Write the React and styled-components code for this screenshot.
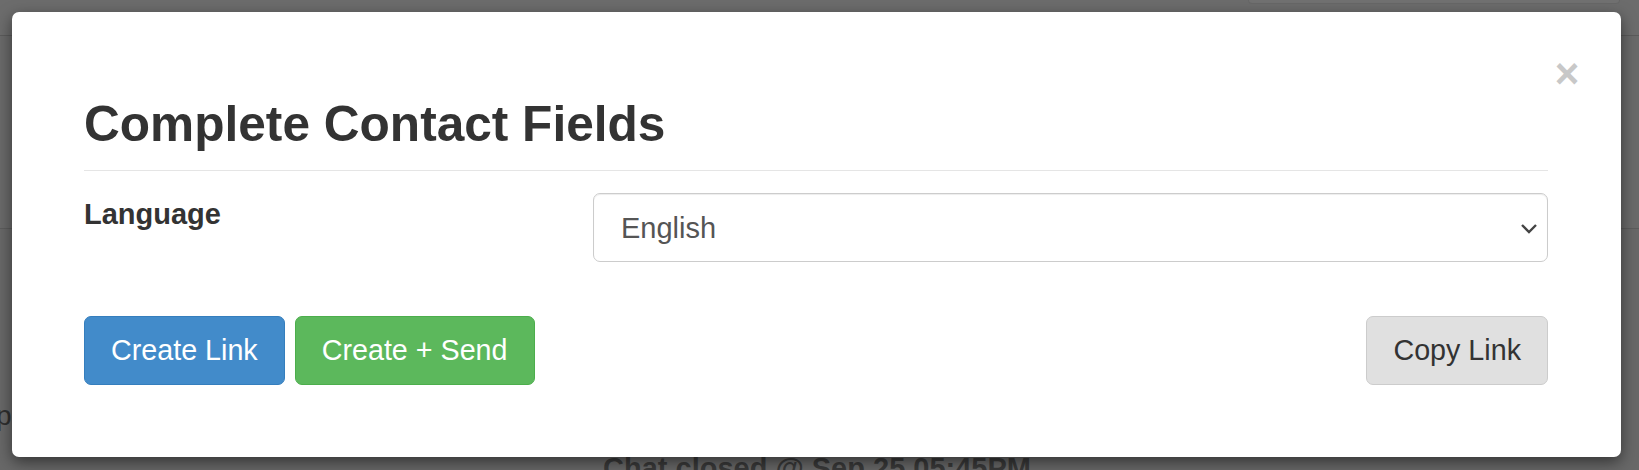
import React from 'react';
import styled, { createGlobalStyle } from 'styled-components';

const GlobalStyle = createGlobalStyle`
  html, body {
    margin: 0;
    padding: 0;
    background: #686868;
  }
  * {
    box-sizing: border-box;
  }
`

const Page = styled.div`
    position: relative;
    width: 1639px;
    height: 470px;
    overflow: hidden;
    background: #686868;
    font-family: "Liberation Sans", Arial, sans-serif;
`

const TopBar = styled.div`
    display: flex;
    justify-content: flex-end;
    align-items: flex-start;
    height: 36px;
    background: #6c6c6c;
    border-bottom: 1px solid #5b5b5b;
    padding-right: 19px;
`

const SearchStub = styled.div`
    width: 372px;
    height: 4px;
    background: #717171;
    border: 1px solid #676767;
    border-top: none;
    border-radius: 0 0 6px 6px;
`

const Band = styled.div`
    height: 193px;
    background: #6a6a6a;
    border-bottom: 1px solid #5c5c5c;
`

const Lower = styled.div`
    display: flex;
    flex-direction: column;
`

const Stray = styled.div`
    margin: 167px 0 0 -4px;
    font-size: 28px;
    line-height: 40px;
    color: #2f2f2f;
`

const ChatNote = styled.div`
    margin: 12px 0 0 603px;
    font-size: 29px;
    line-height: 40px;
    font-weight: bold;
    color: #3a3a3a;
`

const Dialog = styled.div`
    position: absolute;
    left: 12px;
    top: 12px;
    width: 1609px;
    background: #fff;
    border-radius: 7px;
    box-shadow: 0 5px 15px rgba(0, 0, 0, 0.5);
    padding: 0 73px 72px 72px;
    color: #333;
`

const Close = styled.button`
    position: absolute;
    top: 45px;
    right: 39px;
    width: 30px;
    height: 34px;
    padding: 0;
    border: none;
    background: transparent;
    font-family: "Liberation Sans", Arial, sans-serif;
    font-size: 42px;
    font-weight: bold;
    line-height: 34px;
    color: #c8c8c8;
    cursor: pointer;
`

const Header = styled.div`
    padding: 85px 0 18px;
    border-bottom: 1px solid #e5e5e5;
`

const Title = styled.h1`
    margin: 0;
    font-size: 49.6px;
    line-height: 55px;
    font-weight: bold;
    color: #333;
`

const FieldRow = styled.div`
    display: grid;
    grid-template-columns: 448px 1fr;
    column-gap: 61px;
    margin-top: 22px;
`

const Label = styled.label`
    padding-top: 1px;
    font-size: 29px;
    line-height: 41px;
    font-weight: bold;
    color: #333;
`

const SelectWrap = styled.div`
    position: relative;
`

const Select = styled.select`
    width: 100%;
    height: 69px;
    padding: 0 60px 0 27px;
    border: 1px solid #ccc;
    border-radius: 7px;
    background: #fff;
    box-shadow: inset 0 1px 1px rgba(0, 0, 0, 0.075);
    appearance: none;
    font-family: "Liberation Sans", Arial, sans-serif;
    font-size: 29px;
    color: #555;
    outline: none;
`

const Chevron = styled.svg`
    position: absolute;
    right: 10px;
    top: 30px;
    pointer-events: none;
`

const Actions = styled.div`
    display: flex;
    align-items: center;
    gap: 10px;
    margin-top: 54px;
`

const Spacer = styled.div`
    flex: 1;
`

const tones = {
    primary: { bg: '#428bca', border: '#357ebd', color: '#fff' },
    success: { bg: '#5cb85c', border: '#4cae4c', color: '#fff' },
    neutral: { bg: '#e0e0e0', border: '#ccc', color: '#333' },
}

const Button = styled.button`
    height: 69px;
    padding: 0 26px;
    border: 1px solid ${p => tones[p.$tone].border};
    border-radius: 7px;
    background: ${p => tones[p.$tone].bg};
    color: ${p => tones[p.$tone].color};
    font-family: "Liberation Sans", Arial, sans-serif;
    font-size: 28.7px;
    line-height: 41px;
    cursor: pointer;
`

function App() {
    return (
        <Page>
            <GlobalStyle />
            <TopBar>
                <SearchStub />
            </TopBar>
            <Band />
            <Lower>
                <Stray>p</Stray>
                <ChatNote>Chat closed @ Sep 25 05:45PM</ChatNote>
            </Lower>

            <Dialog>
                <Close aria-label="Close">×</Close>
                <Header>
                    <Title>Complete Contact Fields</Title>
                </Header>

                <FieldRow>
                    <Label htmlFor="language">Language</Label>
                    <SelectWrap>
                        <Select id="language" defaultValue="en">
                            <option value="en">English</option>
                            <option value="es">Spanish</option>
                            <option value="fr">French</option>
                        </Select>
                        <Chevron width="18" height="11" viewBox="0 0 18 11">
                            <path d="M2 2 L9 9 L16 2" fill="none" stroke="#444" strokeWidth="2.4" />
                        </Chevron>
                    </SelectWrap>
                </FieldRow>

                <Actions>
                    <Button $tone="primary">Create Link</Button>
                    <Button $tone="success">Create + Send</Button>
                    <Spacer />
                    <Button $tone="neutral">Copy Link</Button>
                </Actions>
            </Dialog>
        </Page>
    )
}

export default App;
